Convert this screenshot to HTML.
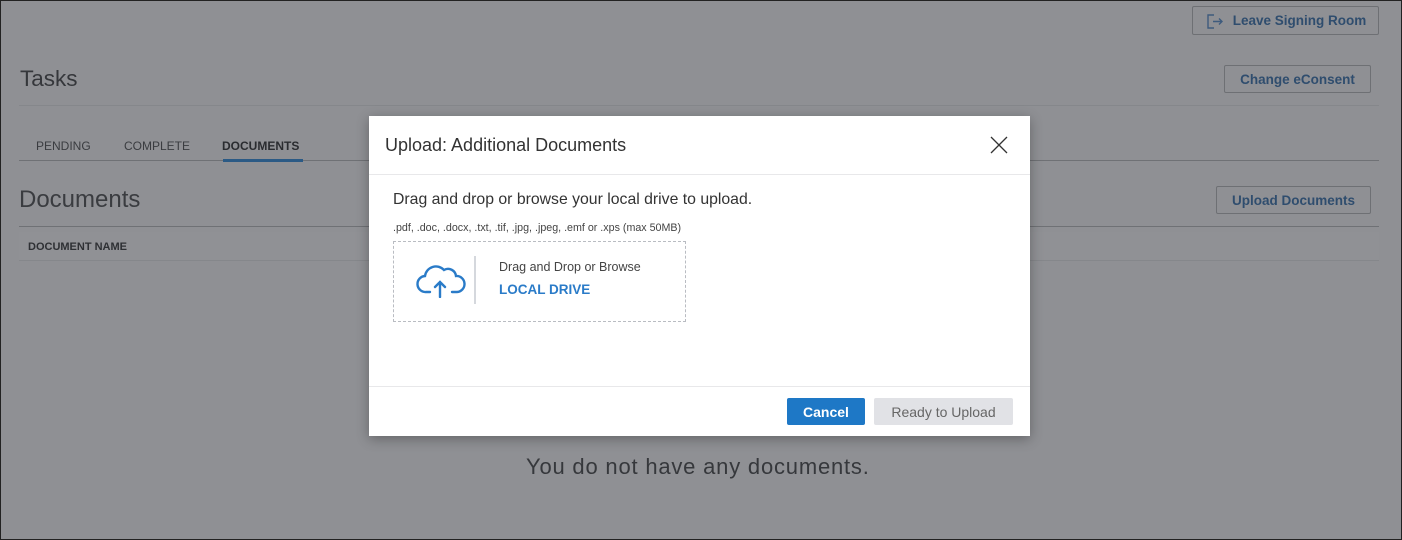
<!DOCTYPE html>
<html><head><style>
*{box-sizing:border-box;margin:0;padding:0}
body{width:1402px;height:540px;overflow:hidden;font-family:"Liberation Sans",sans-serif;background:#8f9094;position:relative}
.frame{position:absolute;left:0;top:0;width:1402px;height:540px;border:1px solid #222;}
.a{position:absolute;white-space:nowrap}
.btn{position:absolute;border:1px solid #6e7074;border-radius:2px;color:#2f4d6e;font-weight:bold;font-size:13.5px;display:flex;align-items:center;justify-content:center}
.line{position:absolute;height:1px;background:#7b7d81}
</style></head><body>
<div class="frame"></div>
<div class="btn" style="left:1192px;top:6px;width:187px;height:29px"><svg width="18" height="18" viewBox="0 0 18 18" style="margin-right:10px" fill="none" stroke="#3e5b7d" stroke-width="1.4"><path d="M9 3H3v13h6M8 9.5h9M14 6.5l3 3-3 3"/></svg>Leave Signing Room</div>
<div class="a" style="left:20px;top:66px;font-size:22.5px;color:#35373b">Tasks</div>
<div class="btn" style="left:1224px;top:65px;width:147px;height:28px">Change eConsent</div>
<div class="line" style="left:19px;top:105px;width:1360px;background:#85878b"></div>
<div class="a" style="left:36px;top:139px;font-size:12px;color:#3a3c40">PENDING</div>
<div class="a" style="left:124px;top:139px;font-size:12px;color:#3a3c40">COMPLETE</div>
<div class="a" style="left:222px;top:139px;font-size:12px;color:#2a2c30;font-weight:bold">DOCUMENTS</div>
<div class="line" style="left:19px;top:160px;width:1360px;background:#6f7175"></div>
<div class="a" style="left:223px;top:159px;width:80px;height:3px;background:#2b5a85"></div>
<div class="a" style="left:19px;top:186px;font-size:24px;color:#3a3c40">Documents</div>
<div class="btn" style="left:1216px;top:186px;width:155px;height:28px">Upload Documents</div>
<div class="line" style="left:19px;top:226px;width:1360px;background:#6f7175"></div>
<div class="a" style="left:19px;top:232px;width:1360px;height:29px;border-bottom:1px solid #85878b;background:#909195"></div>
<div class="a" style="left:28px;top:241px;font-size:11px;font-weight:bold;color:#2e3034">DOCUMENT NAME</div>
<div class="a" style="left:526px;top:454px;font-size:22px;letter-spacing:0.8px;color:#36383c">You do not have any documents.</div>

<div class="a" style="left:369px;top:116px;width:661px;height:320px;background:#fff;box-shadow:0 3px 12px rgba(0,0,0,.3)">
  <div class="a" style="left:16px;top:19px;font-size:18px;color:#333">Upload: Additional Documents</div>
  <svg class="a" style="left:621px;top:20px" width="18" height="18" viewBox="0 0 18 18" stroke="#333" stroke-width="1.3"><path d="M1 1l16 16M17 1L1 17"/></svg>
  <div class="a" style="left:0;top:58px;width:661px;height:1px;background:#e8e8ea"></div>
  <div class="a" style="left:24px;top:75px;font-size:15.8px;color:#333">Drag and drop or browse your local drive to upload.</div>
  <div class="a" style="left:24px;top:106px;font-size:10.7px;color:#444">.pdf, .doc, .docx, .txt, .tif, .jpg, .jpeg, .emf or .xps (max 50MB)</div>
  <div class="a" style="left:24px;top:125px;width:293px;height:81px;border:1px dashed #b9bcc2"></div>
  <svg class="a" style="left:47px;top:146px" width="50" height="36" viewBox="0 0 50 36" fill="none" stroke="#2a7bc8" stroke-width="2.4" stroke-linecap="round"><path d="M14 30H10a8 8 0 0 1-1-16 11 11 0 0 1 19-6 8 8 0 0 1 12 6 8 8 0 0 1 1 16h-5"/><path d="M24 35V20M19 25l5-5 5 5"/></svg>
  <div class="a" style="left:105px;top:140px;width:2px;height:48px;background:#d5d8dd"></div>
  <div class="a" style="left:130px;top:144px;font-size:12.5px;color:#444">Drag and Drop or Browse</div>
  <div class="a" style="left:130px;top:166px;font-size:13.5px;font-weight:bold;color:#2a7bc8">LOCAL DRIVE</div>
  <div class="a" style="left:0;top:270px;width:661px;height:1px;background:#e8e8ea"></div>
  <div class="a" style="left:418px;top:282px;width:78px;height:27px;background:#1e78c6;border-radius:2px;color:#fff;font-weight:bold;font-size:14px;display:flex;align-items:center;justify-content:center">Cancel</div>
  <div class="a" style="left:505px;top:282px;width:139px;height:27px;background:#e1e2e6;border-radius:2px;color:#666;font-size:14px;display:flex;align-items:center;justify-content:center">Ready to Upload</div>
</div>
</body></html>
